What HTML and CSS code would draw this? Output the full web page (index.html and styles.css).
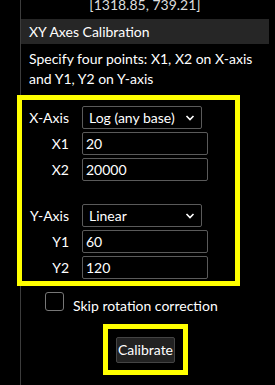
FILE: index.html
```html
<!DOCTYPE html>
<html lang="en">
  <head>
    <title>XY Axes Calibration</title>
    <link rel="stylesheet" href="styles.css">
  </head>
  <body>
    <div class="panel">
      <div class="coords">[1318.85, 739.21]</div>
      <div class="header">XY Axes Calibration</div>
      <p class="desc">Specify four points: X1, X2 on X-axis and Y1, Y2 on Y-axis</p>

      <div class="highlight axes">
        <div class="row">
          <label>X-Axis</label>
          <div class="select">Log (any base)
            <svg width="10" height="8" viewBox="0 0 10 8"><path d="M1.5 2 L5 5.5 L8.5 2" fill="none" stroke="#fff" stroke-width="1.6"/></svg>
          </div>
        </div>
        <div class="row">
          <label>X1</label>
          <input type="text" value="20">
        </div>
        <div class="row">
          <label>X2</label>
          <input type="text" value="20000">
        </div>

        <div class="row spaced">
          <label>Y-Axis</label>
          <div class="select">Linear
            <svg width="10" height="8" viewBox="0 0 10 8"><path d="M1.5 2 L5 5.5 L8.5 2" fill="none" stroke="#fff" stroke-width="1.6"/></svg>
          </div>
        </div>
        <div class="row">
          <label>Y1</label>
          <input type="text" value="60">
        </div>
        <div class="row">
          <label>Y2</label>
          <input type="text" value="120">
        </div>
      </div>

      <div class="check">
        <span class="box"></span>
        <span>Skip rotation correction</span>
      </div>

      <div class="highlight calibrate">
        <button>Calibrate</button>
      </div>
    </div>
  </body>
</html>
```

FILE: styles.css
```css
body {
  margin: 0;
  background-color: #000;
  color: #fff;
  font-family: Lato, "Noto Sans", sans-serif;
  font-size: 14px;
  height: 385px;
  overflow: hidden;
}
.panel {
  margin-left: 20px;
  width: 248px;
  height: 385px;
  border-left: 1px solid #3c3c3c;
}
.coords {
  height: 19px;
  line-height: 10px;
  text-align: center;
  color: #ddd;
  overflow: hidden;
}
.header {
  background-color: #262626;
  height: 25px;
  line-height: 25px;
  padding-left: 8px;
}
.desc {
  margin: 0;
  padding: 5px 8px 0 8px;
  line-height: 20px;
  height: 46px;
}
.highlight {
  border: 5px solid #ffff00;
}
.axes {
  margin-left: -4px;
  width: 213px;
  height: 175px;
  padding-top: 6px;
  box-sizing: content-box;
}
.row {
  display: flex;
  align-items: center;
  height: 23px;
  margin-bottom: 3px;
}
.row.spaced {
  margin-top: 23px;
}
.row label {
  width: 47px;
  margin-right: 13px;
  text-align: right;
}
.select {
  width: 120px;
  height: 23px;
  box-sizing: border-box;
  border: 1px solid #5a5a5a;
  border-radius: 2px;
  padding: 0 6px;
  display: flex;
  align-items: center;
  justify-content: space-between;
  line-height: 21px;
}
input {
  width: 126px;
  height: 23px;
  box-sizing: border-box;
  border: 1px solid #5a5a5a;
  border-radius: 2px;
  background-color: #000;
  color: #fff;
  font-family: inherit;
  font-size: 14px;
  padding: 0 3px;
}
.check {
  display: flex;
  align-items: center;
  margin: 6px 0 0 24px;
  height: 19px;
}
.check .box {
  width: 19px;
  height: 19px;
  box-sizing: border-box;
  border: 1px solid #777;
  border-radius: 3px;
  margin-right: 9px;
}
.check span:last-child {
  position: relative;
  top: 4px;
}
.calibrate {
  width: 75px;
  height: 41px;
  margin: 13px 0 0 82px;
  display: flex;
  align-items: center;
  justify-content: center;
}
button {
  width: 59px;
  height: 26px;
  background-color: #222;
  border: 1px solid #444;
  border-radius: 2px;
  color: #fff;
  font-family: inherit;
  font-size: 14px;
  padding: 0;
}
```
